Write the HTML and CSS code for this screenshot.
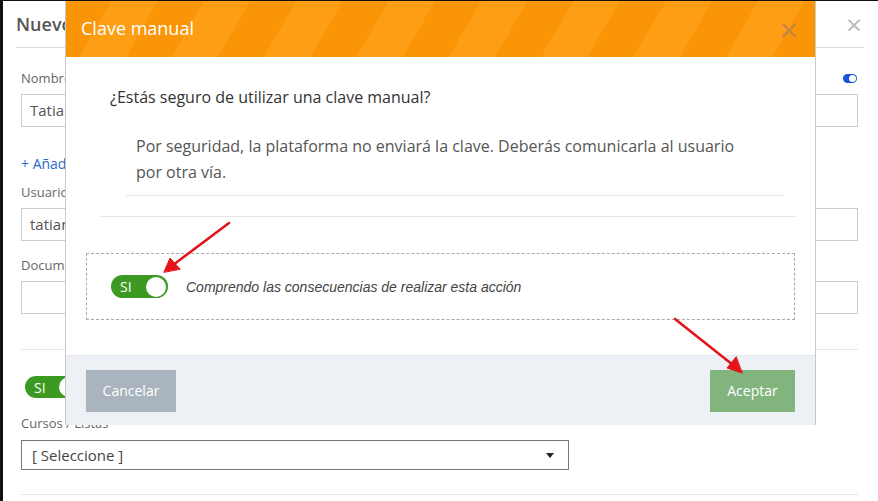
FILE: index.html
```html
<!DOCTYPE html>
<html lang="es">
<head>
    <meta charset="UTF-8">
    <meta name="viewport" content="width=device-width, initial-scale=1.0">
    <title>Clave manual</title>
    <link rel="stylesheet" href="styles.css">
</head>
<body>
    <div class="page">
        <div class="bg-header">
            <h3>Nuevo usuario</h3>
            <span class="bg-close">&times;</span>
        </div>
        <div class="bg-form">
            <div class="label-row">
                <label>Nombre</label>
                <span class="mini-toggle"></span>
            </div>
            <div class="field">Tatiana</div>
            <a class="add-link">+ Añadir apellido</a>
            <label>Usuario</label>
            <div class="field">tatiana</div>
            <label>Documento</label>
            <div class="field"></div>
            <hr class="sep">
            <div class="toggle toggle-bg"><span>SI</span><i></i></div>
            <label class="courses">Cursos / Listas</label>
            <div class="select">[ Seleccione ]<b></b></div>
            <hr class="sep bottom">
        </div>
    </div>

    <div class="dialog">
        <div class="dialog-header">
            <h2>Clave manual</h2>
            <span class="dialog-close">&times;</span>
        </div>
        <div class="dialog-body">
            <div class="confirm">
                <p class="question">¿Estás seguro de utilizar una clave manual?</p>
                <div class="note">
                    <p>Por seguridad, la plataforma no enviará la clave. Deberás comunicarla al usuario por otra vía.</p>
                </div>
            </div>
            <div class="ack">
                <div class="toggle"><span>SI</span><i></i></div>
                <em>Comprendo las consecuencias de realizar esta acción</em>
            </div>
        </div>
        <div class="dialog-footer">
            <button class="btn-cancel">Cancelar</button>
            <button class="btn-ok">Aceptar</button>
        </div>
    </div>

    <svg class="arrows" width="878" height="501" viewBox="0 0 878 501">
        <g stroke="#e3141b" stroke-width="2.6" fill="#e3141b" stroke-linecap="round">
            <line x1="226" y1="222" x2="170" y2="264"/>
            <polygon points="161,271 167,257 177,268" stroke-width="1"/>
            <line x1="672" y1="318" x2="730" y2="364"/>
            <polygon points="739,372 724,367 733,356" stroke-width="1"/>
        </g>
    </svg>
</body>
</html>
```

FILE: styles.css
```css
* { box-sizing: border-box; }
body { margin: 0; width: 878px; height: 501px; overflow: hidden; background: #fff; font-family: "Open Sans", sans-serif; color: #555; border-top: 1px solid #111; border-left: 3px solid #111; position: relative; }

/* background modal */
.page { padding: 0 14px 0 13px; }
.bg-header { height: 47px; display: flex; align-items: center; justify-content: space-between; border-bottom: 1px solid #ddd; }
.bg-header h3 { margin: 0; font-size: 18px; font-weight: 600; color: #555; }
.bg-close { font-size: 28px; color: #bbb; line-height: 1; margin-right: 2px; }
.bg-form { padding: 0 6px 0 5px; }
.bg-form label { display: block; font-size: 13px; font-weight: 400; color: #666; }
.label-row { display: flex; justify-content: space-between; align-items: center; margin-top: 21px; height: 18px; }
.mini-toggle { width: 14px; height: 9px; border-radius: 5px; background: #1a55d6; position: relative; margin-right: 1px; }
.mini-toggle::after { content: ""; position: absolute; right: 1px; top: 1px; width: 7px; height: 7px; border-radius: 50%; background: #fff; }
.field { height: 33px; margin-top: 7px; border: 1px solid #ccc; padding: 0 8px; font-size: 15px; line-height: 31px; color: #555; }
.add-link { display: block; margin-top: 27px; font-size: 14px; color: #2a6ac8; }
.add-link + label { margin-top: 10px; }
.field + label { margin-top: 15px; }
.sep { border: 0; border-top: 1px solid #e6e6e6; margin: 35px 0 0; }
.sep.bottom { margin-top: 24px; }
.toggle { width: 57px; height: 23px; border-radius: 12px; background: #3c9a22; display: flex; align-items: center; justify-content: space-between; padding: 0 2px 0 9px; }
.toggle span { color: #fff; font-size: 14px; }
.toggle i { width: 20px; height: 20px; border-radius: 50%; background: #fff; }
.toggle-bg { margin: 26px 0 0 4px; width: 56px; height: 22px; }
.bg-form .courses { margin-top: 16px; }
.select { width: 548px; height: 30px; margin-top: 8px; border: 1px solid #777; padding: 0 10px; font-size: 15px; line-height: 28px; color: #444; position: relative; }
.select b { position: absolute; right: 14px; top: 12px; border: 4px solid transparent; border-top: 5px solid #222; border-bottom: 0; }

/* confirmation dialog */
.dialog { position: absolute; left: 62px; top: -1px; width: 751px; height: 425px; background: #fff; border: 1px solid #c9c9c9; border-top: 0; }
.dialog-header { height: 57px; display: flex; align-items: center; justify-content: space-between; padding: 0 15px 0 15px; background: repeating-linear-gradient(120deg, #fb9508 0, #fb9508 40px, #fd9e14 40px, #fd9e14 80px); }
.dialog-header h2 { margin: 0 0 2px; font-size: 18px; font-weight: 400; color: #fff; }
.dialog-close { font-size: 32px; line-height: 1; color: #c4873f; margin: 2px 2px 0 0; }
.dialog-body { padding: 0 20px; }
.confirm { margin-left: 15px; border-bottom: 1px solid #e5e5e5; padding-bottom: 20px; }
.question { margin: 0; padding: 29px 0 0 9px; font-size: 16px; line-height: 22px; color: #333; }
.note { margin: 25px 10px 0 25px; padding: 0 10px 10px; border-bottom: 1px solid #e5e5e5; }
.note p { margin: 0; max-width: 625px; font-size: 16px; line-height: 26px; color: #555; }
.ack { margin-top: 36px; height: 67px; border: 1px dashed #aaa; display: flex; align-items: center; padding: 0 24px; gap: 18px; }
.ack em { font-family: "Liberation Sans", Arial, sans-serif; font-size: 14px; color: #444; }
.dialog-footer { margin-top: 35px; height: 70px; background: #edf1f6; border-top: 1px solid #e4e8ee; display: flex; justify-content: space-between; align-items: center; padding: 0 20px; }
.dialog-footer button { height: 42px; border: 0; font-family: "Open Sans", sans-serif; font-size: 14px; color: #fff; }
.btn-cancel { width: 90px; background: #a9b4be; }
.btn-ok { width: 85px; background: #82b47e; }

.arrows { position: absolute; left: 0; top: 0; pointer-events: none; }
```
